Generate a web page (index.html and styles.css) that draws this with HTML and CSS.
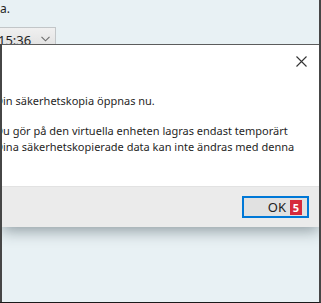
FILE: index.html
```html
<!DOCTYPE html>
<html lang="sv">
<head>
  <meta charset="UTF-8">
  <meta name="viewport" content="width=device-width, initial-scale=1.0">
  <title>Säkerhetskopia</title>
  <link rel="stylesheet" href="styles.css">
</head>
<body>

  <div class="screen">
    <!-- Window behind the dialog -->
    <div class="backdrop">
      <p class="backdrop-text">a.</p>
      <div class="time-select">
        <span class="time-value">15:36</span>
        <svg class="chevron" width="9" height="6" viewBox="0 0 9 6">
          <path d="M0.5 0.8 L4.5 4.8 L8.5 0.8" fill="none" stroke="#6b6b6b" stroke-width="1.1"/>
        </svg>
      </div>
    </div>

    <div class="lower">
      <!-- Dialog -->
      <div class="dialog">
        <div class="dialog-body">
          <div class="title-row">
            <button class="close-btn" aria-label="Stäng">
              <svg width="11" height="11" viewBox="0 0 11 11">
                <path d="M0.5 0.5 L10.5 10.5 M10.5 0.5 L0.5 10.5" stroke="#333" stroke-width="1.1"/>
              </svg>
            </button>
          </div>
          <p class="message">Din säkerhetskopia öppnas nu.</p>
          <p class="message">Du gör på den virtuella enheten lagras endast temporärt<br>Dina säkerhetskopierade data kan inte ändras med denna</p>
        </div>
        <div class="dialog-footer">
          <button class="ok-btn">OK <span class="badge">5</span></button>
        </div>
      </div>
    </div>
  </div>

</body>
</html>
```

FILE: styles.css
```css
:root {
  --window-bg: #e8f1f4;
  --frame-color: #464646;
  --footer-bg: #ebebeb;
  --accent: #0078d7;
  --badge-red: #d62a3c;
  --text-color: #1f1f1f;
}

body {
  margin: 0;
  padding: 0;
  font-family: "Noto Sans", "Open Sans", sans-serif;
  font-size: 11px;
  color: var(--text-color);
}

.screen {
  width: 321px;
  height: 303px;
  box-sizing: border-box;
  background: var(--window-bg);
  border-right: 2px solid var(--frame-color);
  border-bottom: 1px solid #1a1a1a;
  display: flex;
  flex-direction: column;
  overflow: hidden;
}

.backdrop {
  height: 44px;
  flex-shrink: 0;
  overflow: hidden;
}

.backdrop-text {
  margin: 1px 0 0 0;
  line-height: 16px;
  font-size: 12px;
}

.time-select {
  margin-top: 10px;
  width: 56px;
  height: 20px;
  box-sizing: border-box;
  border: 1px solid #c2c6c8;
  border-left: none;
  background: linear-gradient(#f0f0f0, #e2e2e2);
  display: flex;
  align-items: center;
  justify-content: space-between;
  padding-right: 5px;
}

.time-value {
  margin-left: -2px;
  font-size: 13px;
  padding-top: 6px;
}

.chevron {
  margin-top: 4px;
}

.lower {
  flex: 1;
  border-left: 2px solid var(--frame-color);
  overflow: hidden;
}

.dialog {
  background: #fff;
  border-top: 1px solid #5c5c5c;
  box-shadow: 0 4px 14px rgba(40, 55, 65, 0.45);
}

.dialog-body {
  height: 141px;
  box-sizing: border-box;
}

.title-row {
  height: 48px;
  display: flex;
  justify-content: flex-end;
  align-items: flex-start;
}

.close-btn {
  margin: 11px 12px 0 0;
  padding: 0;
  border: none;
  background: none;
  width: 11px;
  height: 11px;
  display: flex;
}

.message {
  margin: 0 0 14px -7px;
  line-height: 16px;
  white-space: nowrap;
}

.dialog-footer {
  height: 41px;
  box-sizing: border-box;
  background: var(--footer-bg);
  border-top: 1px solid #e2e2e2;
  display: flex;
  justify-content: flex-end;
  align-items: center;
  padding-right: 10px;
}

.ok-btn {
  width: 67px;
  height: 22px;
  box-sizing: border-box;
  border: 2px solid var(--accent);
  background: #e1e1e1;
  font-family: inherit;
  font-size: 13px;
  color: #222;
  display: flex;
  align-items: center;
  justify-content: flex-end;
  gap: 4px;
  padding: 0 5px 0 0;
}

.badge {
  background: var(--badge-red);
  color: #fff;
  font-weight: bold;
  font-size: 11px;
  width: 12px;
  height: 15px;
  line-height: 15px;
  text-align: center;
}
```
